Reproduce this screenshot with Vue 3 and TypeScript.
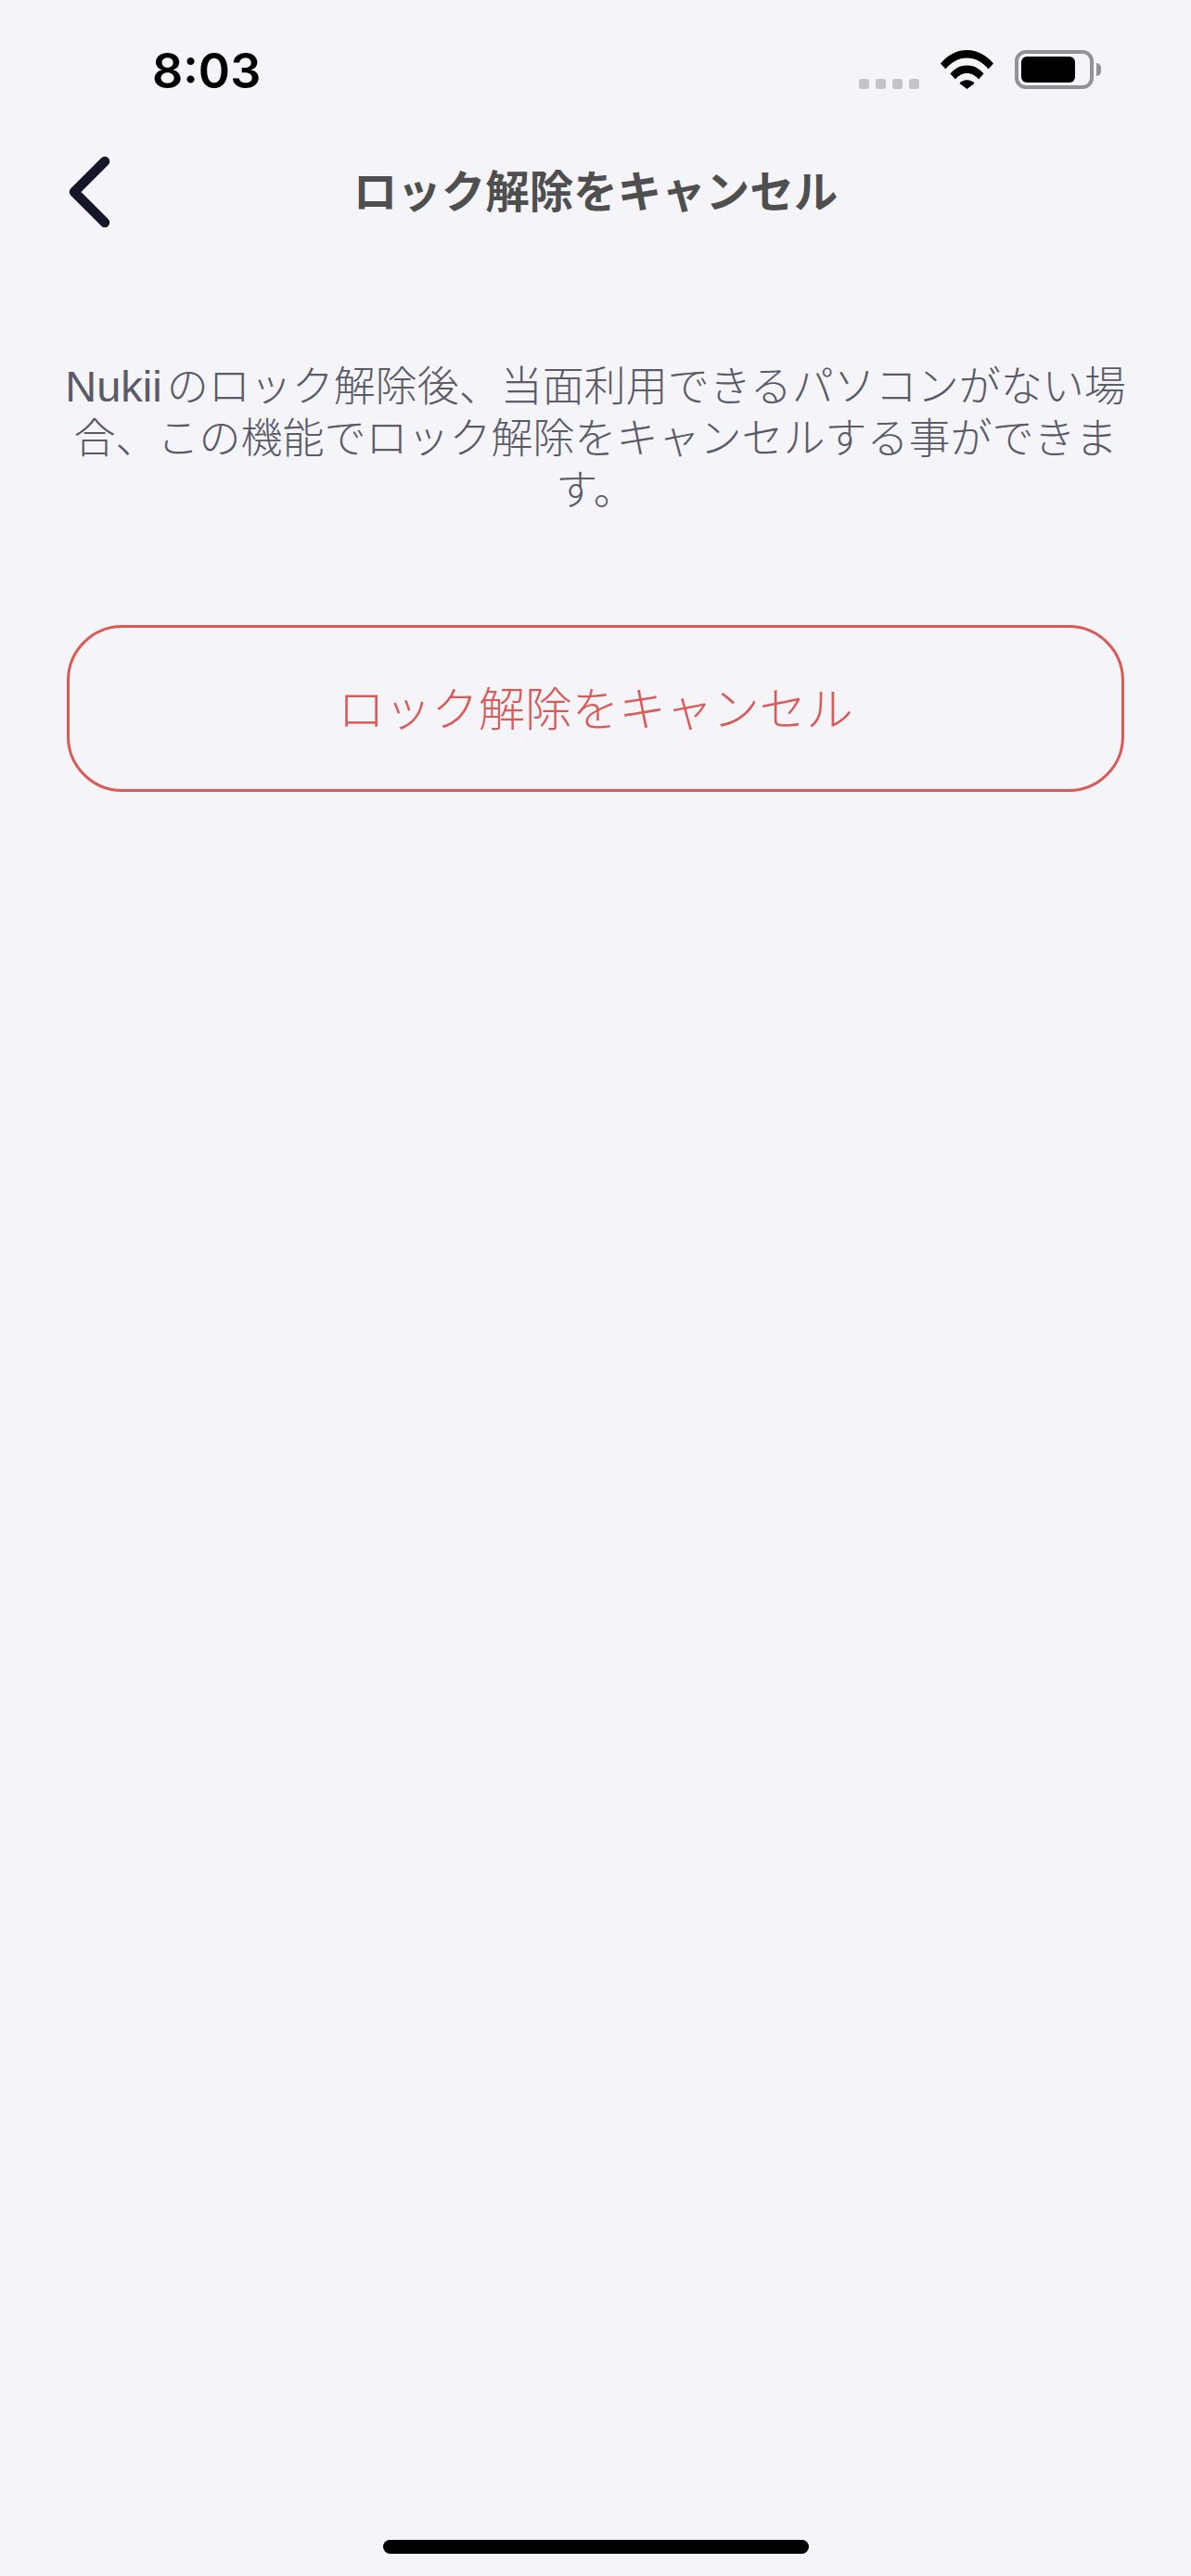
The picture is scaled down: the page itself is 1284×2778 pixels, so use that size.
<script setup lang="ts">
const title = 'ロック解除をキャンセル'
const brand = 'Nukii'
const description =
  'のロック解除後、当面利用できるパソコンがない場合、この機能でロック解除をキャンセルする事ができます。'
</script>

<template>
  <div class="page">
    <div class="status-bar">
      <span class="time">8:03</span>
      <div class="status-icons">
        <div class="signal">
          <i v-for="n in 4" :key="n"></i>
        </div>
        <svg class="wifi" width="57" height="42" viewBox="0 0 57 42">
          <path d="M0 14.5C7.5 5.5 17.5 0 28.5 0S49.5 5.5 57 14.5L51.5 20.5C45.5 13 37.5 8.5 28.5 8.5S11.5 13 5.5 20.5Z" fill="#000" />
          <path d="M10.5 25.5C15 19.8 21.5 16.5 28.5 16.5S42 19.8 46.5 25.5L41 31.5C37.8 27.5 33.3 25 28.5 25S19.2 27.5 16 31.5Z" fill="#000" />
          <path d="M20.5 36C22.5 33.5 25.3 32.3 28.5 32.3S34.5 33.5 36.5 36L28.5 42Z" fill="#000" />
        </svg>
        <div class="battery">
          <div class="battery-body"><div class="battery-level"></div></div>
          <div class="battery-tip"></div>
        </div>
      </div>
    </div>

    <header class="nav">
      <button class="back" aria-label="戻る">
        <svg width="45" height="78" viewBox="0 0 45 78">
          <path d="M39 6 6 39l33 33" fill="none" stroke="#16162b" stroke-width="10.5" stroke-linecap="round" stroke-linejoin="round" />
        </svg>
      </button>
      <h1 class="title">{{ title }}</h1>
    </header>

    <main class="content">
      <p class="description"><span class="brand">{{ brand }}</span><span>{{ description }}</span></p>
      <button class="cancel">{{ title }}</button>
    </main>

    <div class="home-indicator"></div>
  </div>
</template>

<style>
body {
  margin: 0;
  background: #f4f4f9;
}
</style>

<style scoped>
.page {
  height: 2778px;
  display: flex;
  flex-direction: column;
  background: #f4f4f9;
  font-family: "Liberation Sans", "Noto Sans CJK JP", sans-serif;
}

.status-bar {
  height: 132px;
  box-sizing: border-box;
  padding: 48px 97px 0 164px;
  display: flex;
  justify-content: space-between;
  align-items: flex-start;
}
.time {
  font-family: Inter, sans-serif;
  font-size: 52px;
  font-weight: 600;
  line-height: 58px;
  color: #000;
}
.status-icons {
  display: flex;
  align-items: flex-start;
  margin-top: 6px;
}
.signal {
  display: flex;
  gap: 7px;
  margin-top: 31px;
  margin-right: 23px;
}
.signal i {
  width: 11px;
  height: 11px;
  border-radius: 3px;
  background: #c4c4c8;
}
.wifi {
  margin-right: 23px;
}
.battery {
  display: flex;
  align-items: center;
}
.battery-body {
  width: 85px;
  height: 42px;
  box-sizing: border-box;
  border: 4px solid #929296;
  border-radius: 12px;
  padding: 3px;
}
.battery-level {
  width: 58px;
  height: 100%;
  background: #000;
  border-radius: 6px;
}
.battery-tip {
  width: 5px;
  height: 14px;
  margin-left: 3px;
  background: #929296;
  border-radius: 0 7px 7px 0;
}

.nav {
  height: 76px;
  margin-top: 36px;
  padding: 0 72px;
  display: flex;
  align-items: center;
  justify-content: center;
  position: relative;
}
.back {
  position: absolute;
  left: 74px;
  top: 0;
  padding: 0;
  border: 0;
  background: none;
  display: block;
  height: 78px;
}
.title {
  margin: 3px 0 0;
  font-size: 47.5px;
  font-weight: 700;
  line-height: 76px;
  color: #4f4f4f;
}

.content {
  padding: 0 64px;
}
.description {
  margin: 146px 0 0;
  font-size: 45px;
  font-weight: 300;
  line-height: 56px;
  text-align: center;
  color: #5a5a68;
}
.brand {
  font-size: 47px;
  line-height: 1;
  margin-right: 5px;
}
.cancel {
  display: block;
  width: 1140px;
  height: 180px;
  margin: 116px 0 0 8px;
  padding: 0 0 6px;
  box-sizing: border-box;
  background: none;
  border: 3px solid #dc5a56;
  border-radius: 60px;
  font-family: inherit;
  font-size: 50.5px;
  font-weight: 300;
  color: #dc5a56;
}

.home-indicator {
  width: 459px;
  height: 15px;
  margin: auto auto 24px;
  background: #000;
  border-radius: 8px;
}
</style>
